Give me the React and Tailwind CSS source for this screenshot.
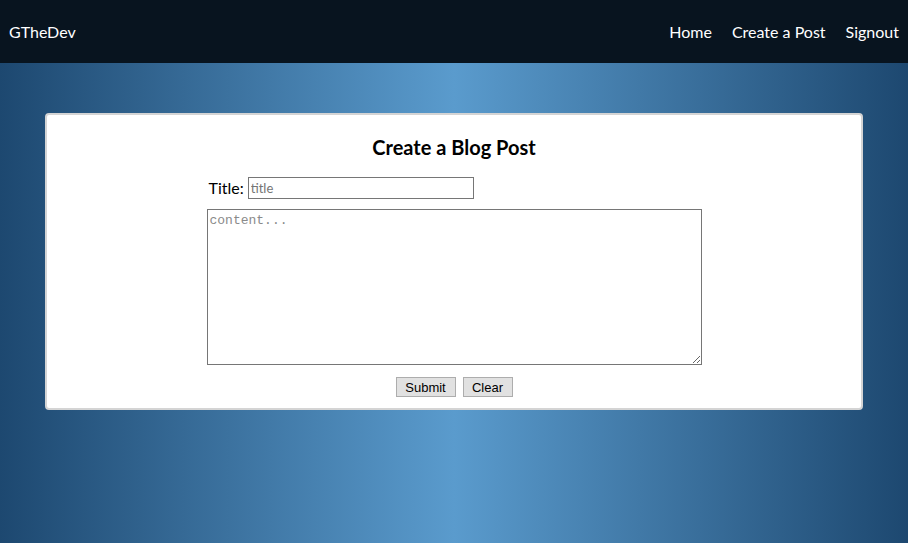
import React from "react";

export default function App() {
  return (
    <div className="min-h-[543px] w-full flex flex-col bg-[linear-gradient(to_right,#1d4870,#5a9bcd_50%,#1d4870)] font-['Lato','Noto_Sans',sans-serif]">
      <nav className="h-[63px] bg-[#08141f] flex items-center justify-between pl-[9px] pr-[9px] text-white text-[16px]">
        <div>GTheDev</div>
        <div className="flex items-center gap-[20px]">
          <a>Home</a>
          <a>Create a Post</a>
          <a>Signout</a>
        </div>
      </nav>
      <div className="pt-[50px] px-[45px]">
        <div className="bg-white border-2 border-[#d4d4d4] rounded-[4px] h-[297px] flex flex-col items-center">
          <h3 className="mt-[20px] text-[20px] font-bold text-black leading-[24px]">Create a Blog Post</h3>
          <div className="w-[495px] mt-[18px] flex flex-col">
            <div className="flex items-center pl-[2px] h-[22px]">
              <span className="text-[16px] text-black mr-[4px]">Title:</span>
              <input
                placeholder="title"
                className="w-[226px] h-[22px] border border-[#767676] px-[2px] text-[13px] font-['Lato',sans-serif] placeholder:text-[#757575] outline-none"
              />
            </div>
            <textarea
              placeholder="content..."
              className="mt-[10px] w-[495px] h-[156px] border border-[#767676] px-[2px] py-[1px] text-[13px] font-['Liberation_Mono',monospace] placeholder:text-[#8a8a8a] outline-none"
            />
          </div>
          <div className="mt-[12px] flex gap-[7px]">
            <button className="h-[20px] w-[60px] bg-[#e1e1e1] border border-[#adadad] text-[13px] text-black font-['Liberation_Sans',sans-serif] leading-none">Submit</button>
            <button className="h-[20px] w-[50px] bg-[#e1e1e1] border border-[#adadad] text-[13px] text-black font-['Liberation_Sans',sans-serif] leading-none">Clear</button>
          </div>
        </div>
      </div>
    </div>
  );
}
